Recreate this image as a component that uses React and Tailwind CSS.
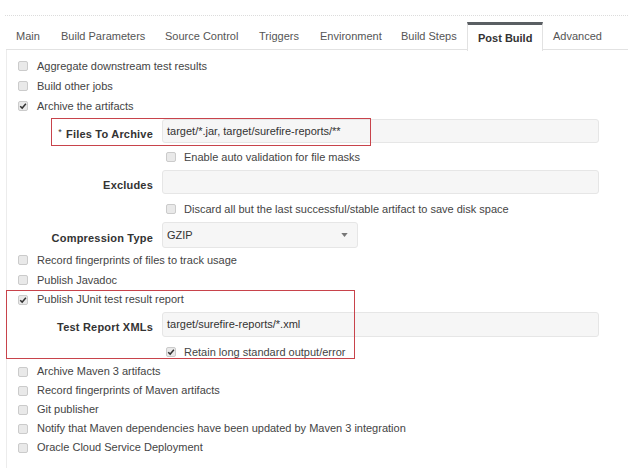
import React from 'react';

const Check = ({ checked }) => (
  <span className="relative inline-flex items-center justify-center w-[10px] h-[10px] rounded-[2px] border border-[#cbcbcb] bg-[#e9e9e9] shrink-0">
    {checked && (
      <svg viewBox="0 0 10 10" className="absolute w-[8px] h-[8px]">
        <path d="M1.5 5.2 L4 7.6 L8.6 2.2" fill="none" stroke="#333" strokeWidth="1.8" />
      </svg>
    )}
  </span>
);

const Row = ({ label, checked, h = 'h-5', className = '' }) => (
  <div className={`flex items-center ${h} ${className}`}>
    <div className="w-[30px] flex justify-end pr-[9px]">
      <Check checked={checked} />
    </div>
    <span className="whitespace-nowrap">{label}</span>
  </div>
);

const SubRow = ({ label, checked, className = '' }) => (
  <div className={`flex items-center h-5 pl-[159px] ${className}`}>
    <Check checked={checked} />
    <span className="ml-[8px] whitespace-nowrap">{label}</span>
  </div>
);

const Field = ({ label, value, star, className = '', h = 'h-6' }) => (
  <div className={`flex items-center ${className}`}>
    <div className="w-[146px] text-right font-bold text-[#333] mt-[6px] tracking-[0.2px] whitespace-nowrap">
      {star && <span className="relative -top-[3px] mr-[4px] font-normal text-[9px]">*</span>}
      {label}
    </div>
    <div className={`ml-[9px] w-[437px] ${h} rounded-[3px] border border-[#e6e6e6] bg-[#f6f6f6] flex items-center px-[4px] text-[#333] whitespace-nowrap`}>
      {value}
    </div>
  </div>
);

const tabs = [
  ['Main', 45],
  ['Build Parameters', 104],
  ['Source Control', 94],
  ['Triggers', 61],
  ['Environment', 81],
  ['Build Steps', 76],
  ['Post Build', 76],
  ['Advanced', 80],
];

export default function App() {
  return (
    <div
      className="w-[628px] h-[468px] bg-white overflow-hidden text-[11px] text-[#444]"
      style={{ fontFamily: '"Liberation Sans", Arial, sans-serif' }}
    >
      <div className="h-[15px]" />
      <div className="ml-[5px] border-t border-dotted border-[#dcdcdc]" />
      <div className="mt-[6px] ml-[6px] flex h-[28px] border-b border-[#e2e2e2]">
        {tabs.map(([t, w]) =>
          t === 'Post Build' ? (
            <div
              key={t}
              style={{ width: w }}
              className="relative shrink-0 whitespace-nowrap -mb-px h-[29px] px-[10px] flex items-center bg-white border-t-[3px] border-t-[#5a5f63] border-x border-x-[#e2e2e2] font-bold text-[#333]"
            >
              {t}
            </div>
          ) : (
            <div
              key={t}
              style={{ width: w }}
              className="shrink-0 whitespace-nowrap px-[10px] flex items-center pt-[2px] text-[#555]"
            >
              {t}
            </div>
          )
        )}
      </div>

      <div className="ml-[6px] border-l border-[#ececec] pt-[6px] h-[420px]">
        <Row label="Aggregate downstream test results" />
        <Row label="Build other jobs" />
        <Row label="Archive the artifacts" checked />

        <div className="relative mt-[3px]">
          <Field label="Files To Archive" star value="target/*.jar, target/surefire-reports/**" />
          <div className="absolute left-[44px] -top-px w-[320px] h-[28px] border border-[#c8434b]" />
        </div>
        <SubRow label="Enable auto validation for file masks" className="mt-[4px]" />
        <Field label="Excludes" value="" className="mt-[3px]" />
        <SubRow label="Discard all but the last successful/stable artifact to save disk space" className="mt-[5px]" />
        <div className="flex items-center mt-[3px]">
          <div className="w-[146px] text-right font-bold text-[#333] mt-[6px] tracking-[0.2px] whitespace-nowrap">Compression Type</div>
          <div className="ml-[9px] w-[196px] h-[26px] rounded-[3px] border border-[#e6e6e6] bg-[#f6f6f6] flex items-center justify-between px-[4px] text-[#333]">
            <span>GZIP</span>
            <svg viewBox="0 0 8 5" className="w-[7px] h-[4px] mr-[5px]">
              <path d="M0 0 H8 L4 5 Z" fill="#777" />
            </svg>
          </div>
        </div>
        <Row label="Record fingerprints of files to track usage" className="mt-[2px]" />
        <Row label="Publish Javadoc" />

        <div className="relative">
          <Row label="Publish JUnit test result report" checked h="h-[19px]" />
          <Field label="Test Report XMLs" value="target/surefire-reports/*.xml" className="mt-[3px]" h="h-[25px]" />
          <SubRow label="Retain long standard output/error" checked className="mt-[5px]" />
          <div className="absolute -left-px top-0 w-[349px] h-[69px] border border-[#c8434b]" />
        </div>

        <Row label="Archive Maven 3 artifacts" h="h-[19px]" />
        <Row label="Record fingerprints of Maven artifacts" h="h-[19px]" />
        <Row label="Git publisher" h="h-[19px]" />
        <Row label="Notify that Maven dependencies have been updated by Maven 3 integration" h="h-[19px]" />
        <Row label="Oracle Cloud Service Deployment" h="h-[19px]" />
      </div>
    </div>
  );
}
